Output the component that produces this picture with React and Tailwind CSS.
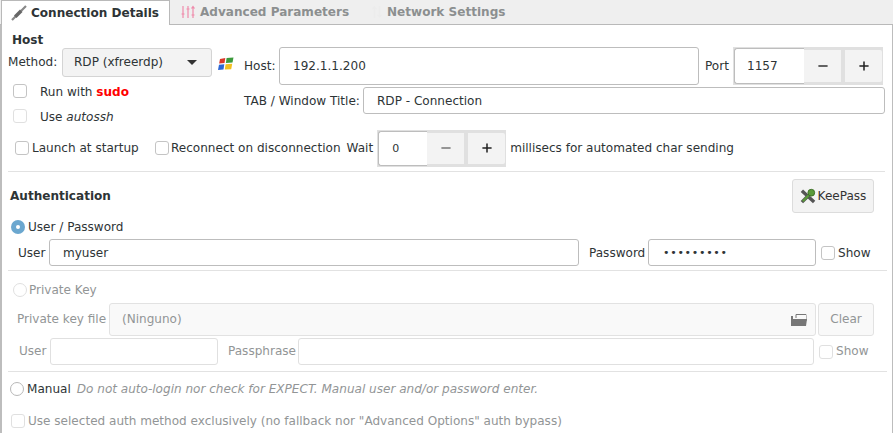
import { Minus, Plus } from "lucide-react";

function Check({ dim, className = "" }) {
  return (
    <span className={`w-[14px] h-[14px] shrink-0 rounded-[3px] border bg-white ${dim ? "border-[#e0e0e0]" : "border-[#c4c4c4]"} ${className}`} />
  );
}

function Spin({ value, className, fieldW, btn, dimMinus }) {
  return (
    <div className={`flex bg-[#e0e0e0] p-[1px] shrink-0 ${className}`}>
      <div className={`${fieldW} bg-white border border-[#bdbdbd] rounded-l-[3px] border-r-0 flex items-center text-[#2e3436]`}>{value}</div>
      <div className={`${btn} bg-[#f3f3f3] flex items-center justify-center my-[2px]`}><Minus size={14} strokeWidth={2.6} color={dimMinus ? "#777" : "#333"} /></div>
      <div className={`${btn} ml-[4px] bg-[#f3f3f3] flex items-center justify-center my-[2px] rounded-r-[2px]`}><Plus size={14} strokeWidth={2.6} color="#222" /></div>
    </div>
  );
}

function Divider({ className = "" }) {
  return <div className={`h-px bg-[#e2e2e2] ${className}`} />;
}

function Radio({ on, dim }) {
  if (on) {
    return (
      <span className="w-[14px] h-[14px] shrink-0 rounded-full bg-[#6ba7cf] flex items-center justify-center">
        <span className="w-[4px] h-[4px] rounded-full bg-white" />
      </span>
    );
  }
  return <span className={`w-[14px] h-[14px] shrink-0 rounded-full border bg-white ${dim ? "border-[#e0e0e0]" : "border-[#b8b8b8]"}`} />;
}

export default function App() {
  return (
    <div className="w-[893px] h-[433px] overflow-hidden bg-white text-[12.05px] leading-none text-[#2e3436] font-['DejaVu_Sans',sans-serif]">
      {/* Tabs */}
      <div className="h-[25px] flex bg-[#efefef] border-b border-[#b9b9b9] font-bold">
        <div className="ml-px w-[169px] h-[25px] bg-white border border-b-0 border-[#b9b9b9] flex items-center pl-[9px] gap-[4px]">
          <svg width="16" height="16" viewBox="0 0 16 16" className="shrink-0">
            <path d="M1 15 L5 11 M10 6 L15 1" stroke="#888" strokeWidth="2.2" fill="none" />
            <path d="M3 10.5 L9 4.5 L11.5 7 L5.5 13 Z" fill="#666" />
          </svg>
          <span>Connection Details</span>
        </div>
        <div className="w-[194px] flex items-center pl-[11px] gap-[5px] text-[#8c8f90]">
          <svg width="14" height="14" viewBox="0 0 14 14" stroke="#ef8bab" strokeWidth="1.2" fill="none" className="shrink-0">
            <path d="M2 1v12M7 1v12M12 2v11M0.5 9h3M5.5 4h3M10.5 10h3M10.5 3.5L12 1.5l1.5 2" />
          </svg>
          <span>Advanced Parameters</span>
        </div>
        <div className="flex items-center pl-[8px] gap-[5px] text-[#8c8f90]">
          <svg width="10" height="14" viewBox="0 0 10 14" stroke="#ececec" strokeWidth="1.5" fill="none" className="shrink-0">
            <path d="M2.5 13V2M0.5 4l2-2 2 2M7.5 1v11M5.5 10l2 2 2-2" />
          </svg>
          <span>Network Settings</span>
        </div>
      </div>

      {/* Page */}
      <div className="h-[408px] border-l-2 border-r border-[#bdbdbd] pl-[6px]">
        <div className="pl-[4px] pt-[9px] font-bold h-[22px]">Host</div>

        <div className="flex h-[88px] -mt-[1px]">
          <div className="w-[236px] shrink-0">
            <div className="flex items-center mt-[2px]">
              <span className="w-[54px]">Method:</span>
              <div className="w-[150px] h-[29px] bg-[#f3f3f3] border border-[#d4d4d4] rounded-[3px] flex items-center justify-between pl-[11px] pr-[14px]">
                <span>RDP (xfreerdp)</span>
                <span className="w-0 h-0 border-x-[5px] border-x-transparent border-t-[5px] border-t-[#333]" />
              </div>
              <svg className="ml-[6px] mt-[3px]" width="16" height="14" viewBox="0 0 16 14">
                <path d="M2 2 L7.3 1 L6.5 6 L1.2 6.6 Z" fill="#d9382a" />
                <path d="M8.6 1 L15.5 0.6 L14.5 5.6 L7.9 6 Z" fill="#3c9a3c" />
                <path d="M1 7.8 L6.3 7.2 L5.5 12.4 L0 13 Z" fill="#2c66d4" />
                <path d="M7.6 7.2 L14.2 6.8 L13.2 12.2 L6.8 12.4 Z" fill="#f0c020" />
              </svg>
            </div>
            <div className="flex items-center ml-[5px] mt-[7px]">
              <Check />
              <span className="ml-[13px] mt-[2px]">Run with <b className="text-[#ff0000]">sudo</b></span>
            </div>
            <div className="flex items-center ml-[5px] mt-[11px]">
              <Check dim />
              <span className="ml-[13px] mt-[2px]">Use <i>autossh</i></span>
            </div>
          </div>
          <div className="flex-1 min-w-0">
            <div className="flex items-center mt-[1px]">
              <span className="w-[35px]">Host:</span>
              <div className="w-[420px] h-[38px] border border-[#bdbdbd] rounded-[3px] flex items-center pl-[13px]">192.1.1.200</div>
              <span className="w-[28px] ml-[6px]">Port</span>
              <Spin value="1157" className="h-[38px] w-[150px]" fieldW="w-[70px] pl-[12px]" btn="w-[37px]" />
            </div>
            <div className="flex items-center mt-[2px]">
              <span className="w-[119px] mt-[2px]">TAB / Window Title:</span>
              <div className="w-[522px] h-[27px] pt-[2px] border border-[#bdbdbd] rounded-[3px] flex items-center pl-[13px]">RDP - Connection</div>
            </div>
          </div>
        </div>

        <div className="flex items-center h-[38px] -mt-[5px] pl-[7px]">
          <Check />
          <span className="ml-[3px] w-[123px]">Launch at startup</span>
          <Check />
          <span className="ml-[2px]">Reconnect on disconnection</span>
          <span className="ml-[6px]">Wait</span>
          <Spin value="0" className="ml-[4px] h-[37px] w-[129px]" fieldW="w-[49px] pl-[13px] text-[11px]" btn="w-[37px]" dimMinus />
          <span className="ml-[4px]">millisecs for automated char sending</span>
        </div>

        <Divider className="mt-[4px] mr-[7px]" />

        <div className="flex items-center justify-between h-[34px] mt-[7px] pl-[2px] pr-[18px]">
          <span className="font-bold">Authentication</span>
          <div className="w-[82px] h-[34px] bg-[#f3f3f3] border border-[#dcdcdc] rounded-[3px] flex items-center justify-center gap-[2px] text-[#333]">
            <svg width="16" height="16" viewBox="0 0 17 17" className="shrink-0">
              <path d="M2 3 L15 15 M2 15 L8 9" stroke="#555" strokeWidth="3.6" fill="none" />
              <path d="M3 14 L10 7" stroke="#5a9a3a" strokeWidth="2.4" fill="none" />
              <circle cx="12" cy="5" r="3.6" fill="#5a9a3a" stroke="#3d6e26" />
            </svg>
            <span>KeePass</span>
          </div>
        </div>

        <div className="flex items-center h-[14px] mt-[7px] pl-[3px] gap-[3px]">
          <Radio on />
          <span>User / Password</span>
        </div>

        <div className="flex items-center h-[27px] mt-[5px] pl-[10px]">
          <span className="w-[31px] mt-[2px]">User</span>
          <div className="w-[530px] h-[27px] pt-[2px] border border-[#bdbdbd] rounded-[3px] flex items-center pl-[13px]">myuser</div>
          <span className="ml-[10px] w-[59px] mt-[2px]">Password</span>
          <div className="w-[168px] h-[27px] border border-[#bdbdbd] rounded-[3px] flex items-center pl-[14px] text-[11px] tracking-[0.7px]">•••••••••</div>
          <Check className="ml-[5px]" />
          <span className="ml-[3px] mt-[2px]">Show</span>
        </div>

        <Divider className="mt-[4px] mr-[5px]" />

        <div className="flex items-center h-[14px] mt-[12px] pl-[5px] gap-[2px] text-[#929596]">
          <Radio dim />
          <span>Private Key</span>
        </div>

        <div className="flex items-center h-[33px] mt-[6px] pl-[9px] text-[#929596]">
          <span className="w-[92px] shrink-0">Private key file</span>
          <div className="relative w-[707px] h-[33px] bg-[#f9f9f9] border border-[#e2e2e2] rounded-[3px] flex items-center pl-[12px]">
            (Ninguno)
            <svg className="absolute right-[8px] top-[9px]" width="16" height="14" viewBox="0 0 16 14">
              <path d="M5 5V1.5H15L16 2.5V8" fill="none" stroke="#777" />
              <path d="M0 3h2v3h14l-1 7H0Z" fill="#777" />
            </svg>
          </div>
          <div className="ml-[2px] w-[56px] h-[33px] bg-[#f9f9f9] border border-[#e2e2e2] rounded-[3px] flex items-center justify-center">Clear</div>
        </div>

        <div className="flex items-center h-[27px] mt-[2px] pl-[11px] text-[#929596]">
          <span className="w-[31px]">User</span>
          <div className="w-[168px] h-[27px] border border-[#e0e0e0] rounded-[3px]" />
          <span className="ml-[10px] w-[70px]">Passphrase</span>
          <div className="w-[516px] h-[27px] border border-[#e0e0e0] rounded-[3px]" />
          <Check dim className="ml-[5px]" />
          <span className="ml-[3px]">Show</span>
        </div>

        <Divider className="mt-[6px] mr-[5px]" />

        <div className="flex items-center h-[14px] mt-[10px] pl-[2px] gap-[3px]">
          <Radio />
          <span>Manual</span>
          <i className="ml-[3px] text-[#929596]">Do not auto-login nor check for EXPECT. Manual user and/or password enter.</i>
        </div>

        <div className="flex items-center h-[14px] mt-[18px] pl-[3px] gap-[3px] text-[#929596]">
          <Check dim />
          <span>Use selected auth method exclusively (no fallback nor "Advanced Options" auth bypass)</span>
        </div>
      </div>
    </div>
  );
}
